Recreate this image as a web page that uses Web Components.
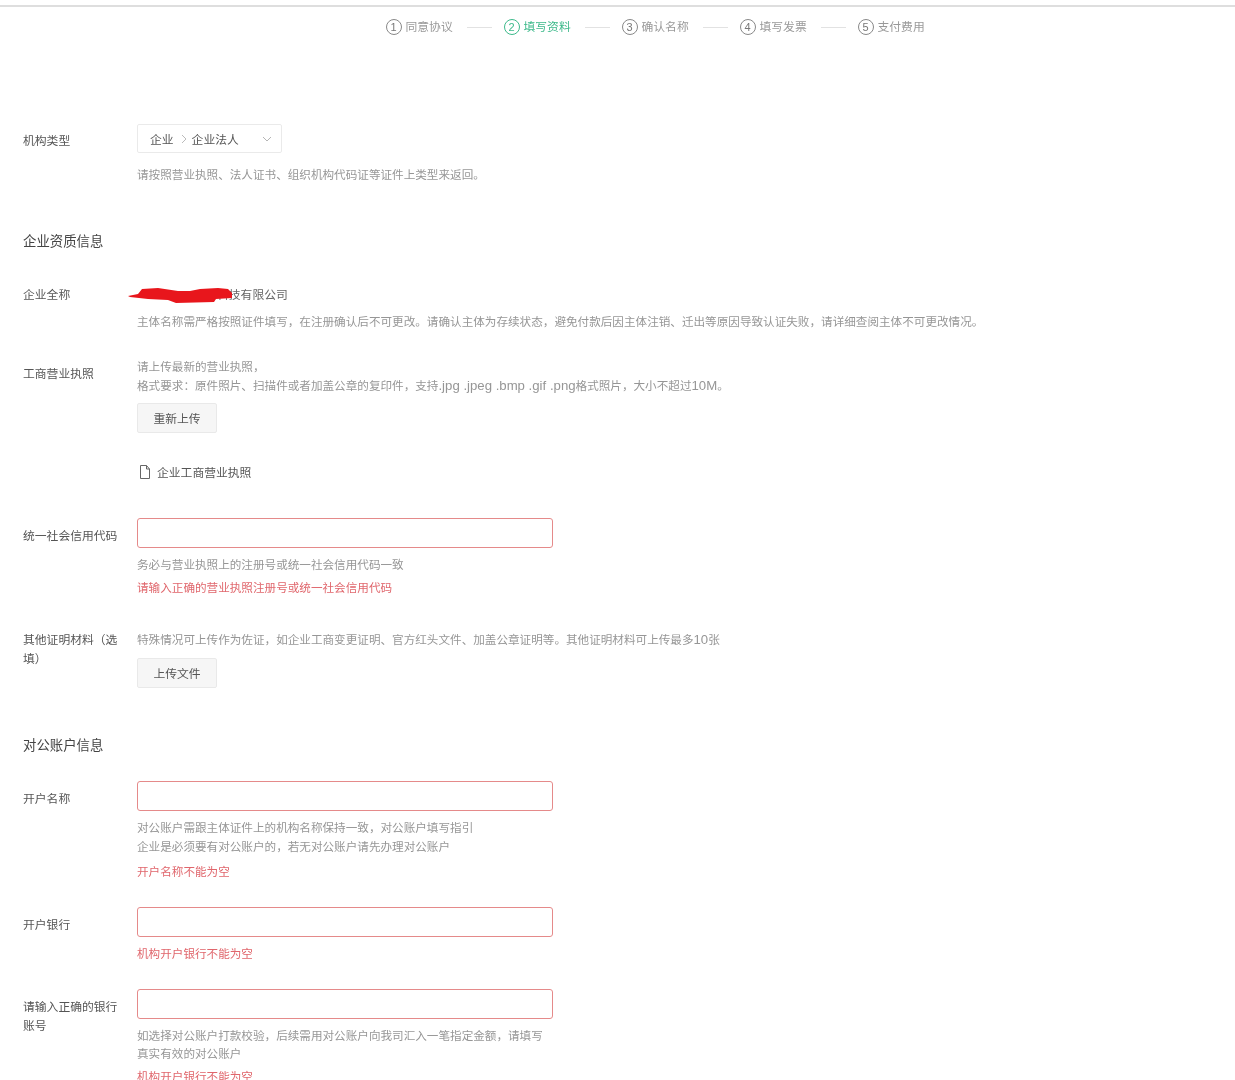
<!DOCTYPE html>
<html lang="zh-CN">
<head>
<meta charset="utf-8">
<title>填写资料</title>
<style>
    html, body { margin: 0; background: #fff; }
    body {
        height: 1080px;
        overflow: hidden;
        font-family: "Liberation Sans", "Noto Sans CJK SC", sans-serif;
        font-size: 11.8px;
        color: #555;
    }
    wizard-page > * { filter: blur(0.5px); }
    .latin { font-size: 13.2px; }
</style>
</head>
<body>
<wizard-page>
    <wizard-steps>
        <wizard-step num="1" text="同意协议"></wizard-step>
        <wizard-step num="2" text="填写资料" active></wizard-step>
        <wizard-step num="3" text="确认名称"></wizard-step>
        <wizard-step num="4" text="填写发票"></wizard-step>
        <wizard-step num="5" text="支付费用"></wizard-step>
    </wizard-steps>

    <form-row label="机构类型" label-top="8" style="margin-top:89px">
        <cascade-select first="企业" second="企业法人"></cascade-select>
        <help-text style="margin-top:12px">请按照营业执照、法人证书、组织机构代码证等证件上类型来返回。</help-text>
    </form-row>

    <section-title style="margin-top:48px">企业资质信息</section-title>

    <form-row label="企业全称" label-top="1" style="margin-top:34px">
        <redacted-name>科技有限公司</redacted-name>
        <help-text style="margin-top:9px">主体名称需严格按照证件填写&#xFF0C;在注册确认后不可更改。请确认主体为存续状态&#xFF0C;避免付款后因主体注销、迁出等原因导致认证失败&#xFF0C;请详细查阅主体不可更改情况。</help-text>
    </form-row>

    <form-row label="工商营业执照" label-top="8" style="margin-top:27px">
        <help-text lh="19">请上传最新的营业执照&#xFF0C;<br>格式要求&#xFF1A;原件照片、扫描件或者加盖公章的复印件&#xFF0C;支持<span class="latin">.jpg .jpeg .bmp .gif .png</span>格式照片&#xFF0C;大小不超过<span class="latin">10M</span>。</help-text>
        <upload-button style="margin-top:8px">重新上传</upload-button>
        <file-link style="margin-top:30px">企业工商营业执照</file-link>
    </form-row>

    <form-row label="统一社会信用代码" label-top="9" style="margin-top:37px">
        <text-input></text-input>
        <help-text style="margin-top:7px">务必与营业执照上的注册号或统一社会信用代码一致</help-text>
        <help-text error style="margin-top:5px">请输入正确的营业执照注册号或统一社会信用代码</help-text>
    </form-row>

    <form-row label="其他证明材料&#xFF08;选填&#xFF09;" label-top="1" style="margin-top:34px">
        <help-text>特殊情况可上传作为佐证&#xFF0C;如企业工商变更证明、官方红头文件、加盖公章证明等。其他证明材料可上传最多<span class="latin">10</span>张</help-text>
        <upload-button style="margin-top:10px">上传文件</upload-button>
    </form-row>

    <section-title style="margin-top:47px">对公账户信息</section-title>

    <form-row label="开户名称" label-top="9" style="margin-top:26px">
        <text-input></text-input>
        <help-text lh="19" style="margin-top:7px">对公账户需跟主体证件上的机构名称保持一致&#xFF0C;对公账户填写指引<br>企业是必须要有对公账户的&#xFF0C;若无对公账户请先办理对公账户</help-text>
        <help-text error style="margin-top:6px">开户名称不能为空</help-text>
    </form-row>

    <form-row label="开户银行" label-top="9" style="margin-top:27px">
        <text-input></text-input>
        <help-text error style="margin-top:7px">机构开户银行不能为空</help-text>
    </form-row>

    <form-row label="请输入正确的银行账号" label-top="9" style="margin-top:27px">
        <text-input></text-input>
        <help-text style="margin-top:7px;max-width:416px">如选择对公账户打款校验&#xFF0C;后续需用对公账户向我司汇入一笔指定金额&#xFF0C;请填写真实有效的对公账户</help-text>
        <help-text error style="margin-top:5px">机构开户银行不能为空</help-text>
    </form-row>
</wizard-page>

<script>
    class BaseElement extends HTMLElement {
        constructor(html) {
            super();
            this.attachShadow({ mode: 'open' });
            this.shadowRoot.innerHTML = html;
        }
    }

    class WizardPage extends BaseElement {
        constructor() {
            super(`
                <style>
                    :host { display: block; padding-top: 5px; }
                    .rule { height: 2px; background: #dedede; }
                </style>
                <div class="rule"></div>
                <slot></slot>
            `);
        }
    }

    class WizardSteps extends BaseElement {
        constructor() {
            super(`
                <style>
                    :host { display: flex; justify-content: center; padding: 12px 0 0 76px; }
                </style>
                <slot></slot>
            `);
        }
    }

    class WizardStep extends BaseElement {
        constructor() {
            super(`
                <style>
                    :host { display: flex; align-items: center; gap: 4px; color: #999; height: 16px; line-height: 16px; }
                    :host([active]) { color: #3cb98a; }
                    .num {
                        box-sizing: border-box; width: 16px; height: 16px; border: 1px solid #888; border-radius: 50%;
                        display: flex; align-items: center; justify-content: center; font-size: 11px; color: #777;
                    }
                    :host([active]) .num { border-color: #3cb98a; color: #3cb98a; }
                    .text { width: 48px; white-space: nowrap; }
                    .line { width: 25px; height: 1px; background: #e2e2e2; margin: 0 12px 0 9px; }
                    :host(:last-child) .line { display: none; }
                </style>
                <span class="num"></span><span class="text"></span><span class="line"></span>
            `);
        }

        connectedCallback() {
            this.shadowRoot.querySelector('.num').textContent = this.getAttribute('num');
            this.shadowRoot.querySelector('.text').textContent = this.getAttribute('text');
        }
    }

    class SectionTitle extends BaseElement {
        constructor() {
            super(`
                <style>
                    :host { display: block; padding: 1px 0 0 23px; margin-bottom: -1px; font-size: 13.4px; line-height: 20px; color: #444; }
                </style>
                <slot></slot>
            `);
        }
    }

    class FormRow extends BaseElement {
        constructor() {
            super(`
                <style>
                    :host { display: grid; grid-template-columns: 100px 1fr; column-gap: 14px; padding-left: 23px; }
                    .label { line-height: 18.5px; color: #555; word-break: break-all; }
                </style>
                <div class="label"></div>
                <div class="body"><slot></slot></div>
            `);
        }

        connectedCallback() {
            const label = this.shadowRoot.querySelector('.label');
            label.textContent = this.getAttribute('label');
            label.style.paddingTop = (this.getAttribute('label-top') || 0) + 'px';
        }
    }

    class HelpText extends BaseElement {
        constructor() {
            super(`
                <style>
                    :host { display: block; padding-top: 1px; margin-bottom: -1px; color: #969696; font-size: 11.6px; line-height: 18px; }
                    :host([lh="19"]) { line-height: 19px; padding-top: 0; margin-bottom: 0; }
                    :host([error]) { color: #e0666c; }
                </style>
                <slot></slot>
            `);
        }
    }

    class TextInput extends BaseElement {
        constructor() {
            super(`
                <style>
                    :host { display: block; width: 416px; }
                    input {
                        display: block; box-sizing: border-box; width: 100%; height: 30px; padding: 0 10px;
                        border: 1px solid #e58a8a; border-radius: 3px; background: #fff; outline: none;
                    }
                </style>
                <input type="text">
            `);
        }
    }

    class UploadButton extends BaseElement {
        constructor() {
            super(`
                <style>
                    :host { display: block; width: 80px; }
                    button {
                        display: block; box-sizing: border-box; width: 100%; height: 30px; padding: 0 0 2px;
                        border: 1px solid #e9e9e9; border-radius: 2px; background: #f6f6f6; color: #555;
                        font: inherit;
                    }
                </style>
                <button type="button"><slot></slot></button>
            `);
        }
    }

    class CascadeSelect extends BaseElement {
        constructor() {
            super(`
                <style>
                    :host {
                        display: flex; align-items: center; box-sizing: border-box; width: 145px; height: 29px;
                        padding: 0 8px 0 12px; border: 1px solid #eaeaea; border-radius: 2px; color: #555;
                    }
                    .sep { margin: 0 4px 0 6px; display: block; }
                    .arrow { margin-left: auto; display: block; }
                </style>
                <span class="first"></span>
                <svg class="sep" width="8" height="10" viewBox="0 0 8 10" fill="none" stroke="#bbb"><path d="M2 1l4 4-4 4"/></svg>
                <span class="second"></span>
                <svg class="arrow" width="12" height="8" viewBox="0 0 12 8" fill="none" stroke="#b5b5b5"><path d="M2 2l4 4 4-4"/></svg>
            `);
        }

        connectedCallback() {
            this.shadowRoot.querySelector('.first').textContent = this.getAttribute('first');
            this.shadowRoot.querySelector('.second').textContent = this.getAttribute('second');
        }
    }

    class FileLink extends BaseElement {
        constructor() {
            super(`
                <style>
                    :host { display: flex; align-items: center; gap: 6px; height: 18px; padding-left: 2px; color: #555; }
                    svg { display: block; }
                    span { margin-top: -2px; }
                </style>
                <svg width="12" height="14" viewBox="0 0 12 14" fill="none" stroke="#666"><path d="M1.5.5h6l3 3.500v9.500h-9zM7.500.5v3.500h3"/></svg>
                <span><slot></slot></span>
            `);
        }
    }

    class RedactedName extends BaseElement {
        constructor() {
            super(`
                <style>
                    :host { display: block; position: relative; padding: 1px 0 0 80px; margin-bottom: -1px; line-height: 18px; color: #666; }
                    svg { position: absolute; left: -9px; top: 0; }
                </style>
                <slot></slot>
                <svg width="112" height="20" viewBox="0 0 112 20">
                    <path fill="#e8161c" d="M0 11 L10 9 L14 4 L30 3 L50 6 L62 6 L72 4 L90 3 L100 4 L104 8 L104 13 L88 14 L86 17 L48 18 L40 15 L20 14 L2 12 Z"/>
                </svg>
            `);
        }
    }

    customElements.define('wizard-page', WizardPage);
    customElements.define('wizard-steps', WizardSteps);
    customElements.define('wizard-step', WizardStep);
    customElements.define('section-title', SectionTitle);
    customElements.define('form-row', FormRow);
    customElements.define('help-text', HelpText);
    customElements.define('text-input', TextInput);
    customElements.define('upload-button', UploadButton);
    customElements.define('cascade-select', CascadeSelect);
    customElements.define('file-link', FileLink);
    customElements.define('redacted-name', RedactedName);
</script>
</body>
</html>
